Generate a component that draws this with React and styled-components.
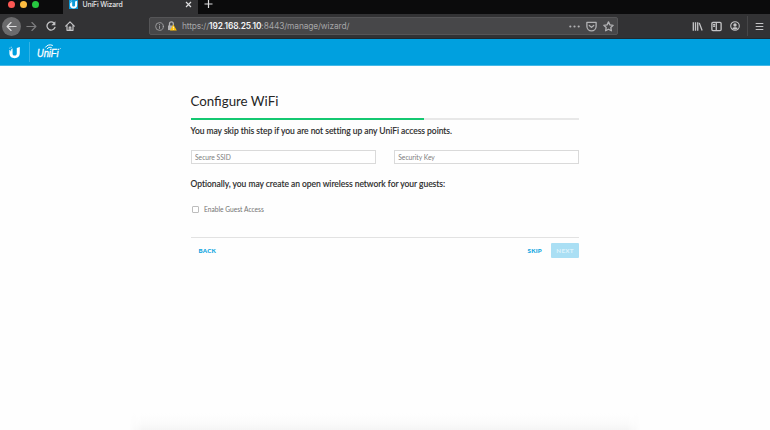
import React from "react";
import styled, { createGlobalStyle } from "styled-components";

const Global = createGlobalStyle`
  *, *::before, *::after { box-sizing: border-box; }
  body { margin: 0; background: #fefefe; overflow: hidden; font-family: Lato, sans-serif; }
`;

const Window = styled.div`
  display: flex;
  flex-direction: column;
  height: 430px;
  overflow: hidden;
`;

const TabBar = styled.div`
  display: flex;
  height: 14px;
  background: #0b0b0c;
`;

const Lights = styled.div`
  display: flex;
  gap: 5px;
  width: 63px;
  padding: 0.5px 0 0 8px;
`;

const Light = styled.span`
  width: 7px;
  height: 7px;
  border-radius: 50%;
  background: ${(p) => p.$color};
`;

const Tab = styled.div`
  display: flex;
  align-items: flex-start;
  width: 135px;
  height: 14px;
  padding-left: 6px;
  background: #323234;
`;

const Favicon = styled.span`
  width: 9px;
  height: 9px;
  background: #0b9bd9;
  svg { display: block; }
`;

const TabTitle = styled.span`
  flex: 1;
  margin-left: 4.5px;
  font: 500 6.9px/9px Inter, sans-serif;
  letter-spacing: -0.15px;
  color: #e4e4e6;
  white-space: nowrap;
`;

const TabClose = styled.svg`
  margin: 1px 6px 0 0;
`;

const NewTab = styled.svg`
  margin: 0 0 0 6px;
`;

const Toolbar = styled.div`
  display: flex;
  align-items: center;
  height: 25px;
  padding-left: 2px;
  background: #323234;
  border-bottom: 1px solid #1d2a32;
`;

const NavButton = styled.span`
  display: flex;
  align-items: center;
  justify-content: center;
  width: 19px;
  height: 19px;
  border-radius: 50%;
  background: ${(p) => (p.$filled ? "#6b6b6d" : "transparent")};
  margin-right: ${(p) => p.$gap || 0}px;
`;

const AddressBar = styled.div`
  display: flex;
  align-items: center;
  width: 469px;
  height: 18px;
  margin-left: 70px;
  padding: 0 3px 0 5px;
  border: 1px solid #555557;
  border-radius: 2px;
  background: #474749;
`;

const LockIcon = styled.svg`
  margin-left: 3px;
`;

const Url = styled.span`
  flex: 1;
  margin-left: 5px;
  font: 400 8.4px/16px Inter, sans-serif;
  letter-spacing: -0.14px;
  color: #a5a5a7;
  white-space: nowrap;
  b { color: #f4f4f5; font-weight: 600; }
`;

const BarIcons = styled.div`
  display: flex;
  align-items: center;
  gap: 6px;
`;

const Tools = styled.div`
  display: flex;
  align-items: center;
  gap: 8px;
  margin-left: auto;
`;

const MenuButton = styled.span`
  display: flex;
  align-items: center;
  height: 20px;
  border-left: 1px solid #464648;
  margin-left: -1px;
  padding: 0 6.5px 0 7px;
`;

const BrandBar = styled.header`
  display: flex;
  align-items: center;
  flex-shrink: 0;
  height: 27px;
  padding-left: 8px;
  background: #00a0df;
  border-bottom: 1px solid #45b9e7;
`;

const BrandDivider = styled.span`
  width: 1px;
  height: 20px;
  margin: 0 7px 0 8px;
  background: #33b3e5;
`;

const Wizard = styled.main`
  width: 388.5px;
  margin: 26px 0 0 190.5px;
`;

const Title = styled.h1`
  margin: 0;
  font-size: 13.3px;
  line-height: 19px;
  font-weight: 400;
  color: #252525;
`;

const Progress = styled.div`
  height: 2px;
  margin-top: 7px;
  background: #e8e8e8;
`;

const ProgressFill = styled.div`
  width: 60%;
  height: 2px;
  background: #14c871;
`;

const Note = styled.p`
  margin: ${(p) => p.$top}px 0 0;
  font-size: 8.5px;
  line-height: 12px;
  font-weight: 500;
  color: #2b2b2b;
  letter-spacing: -0.035px;
  font-variant-ligatures: common-ligatures;
  -webkit-text-stroke: 0.12px #2b2b2b;
`;

const Fields = styled.div`
  display: grid;
  grid-template-columns: 1fr 1fr;
  gap: 18px;
  margin-top: 13px;
`;

const Field = styled.input`
  width: 100%;
  height: 14px;
  padding: 0 3.5px;
  border: 1px solid #dadada;
  border-radius: 0;
  background: #fff;
  font: 400 6.7px Lato, sans-serif;
  &::placeholder { color: #7c7c7c; opacity: 1; }
`;

const GuestOption = styled.label`
  display: flex;
  align-items: center;
  gap: 5px;
  height: 10px;
  margin: 14px 0 0 1.5px;
  font-size: 6.65px;
  line-height: 10px;
  color: #737373;
`;

const Checkbox = styled.input`
  appearance: none;
  width: 7px;
  height: 7px;
  margin: 0;
  border: 1px solid #bdbdbd;
  border-radius: 1px;
  background: #fff;
`;

const Actions = styled.footer`
  display: flex;
  align-items: center;
  height: 21px;
  margin-top: 23px;
  padding-top: 5px;
  padding-left: 8px;
  border-top: 1px solid #e2e2e2;
`;

const Action = styled.button`
  border: 0;
  padding: 0;
  background: none;
  color: #0aa4df;
  font: 900 6.2px/14px Lato, sans-serif;
  letter-spacing: 0.25px;
  margin-right: ${(p) => (p.$push ? "auto" : "9px")};
`;

const NextButton = styled(Action)`
  width: 28px;
  height: 15px;
  margin: 0;
  border-radius: 1px;
  background: #aadff4;
  color: #dcf2fb;
`;

const DockShadow = styled.div`
  width: 512px;
  height: 17px;
  margin: auto 0 0 129px;
  background: linear-gradient(#fefefe, #fbfbfb 60%, #f5f5f5);
  mask-image: linear-gradient(90deg, transparent, #000 14px, #000 498px, transparent);
`;

const Glyph = ({ size = 10, children, color = "#c3c3c5", width = 1.1 }) => (
  <svg width={size} height={size} viewBox="0 0 10 10" fill="none" stroke={color} strokeWidth={width} strokeLinecap="round" strokeLinejoin="round">
    {children}
  </svg>
);

const UMark = ({ size }) => (
  <svg width={size} height={size} viewBox="0 0 12 12" fill="#fff">
    <path d="M4.200 2.300v4.300c0 1.500.6 2.200 1.900 2.200 1.300 0 2-.6 2-2.100V1.900l2.800-1v5.800c0 2.900-1.700 4.500-4.700 4.500S1.300 9.600 1.300 6.700V3.600h.9v1.200h.7V2.900h.6v-.6z" />
    <path d="M1.300 1.500h.8v.8h-.8zM2.600.7h.7v.8h-.7z" />
  </svg>
);

const UniFiLogo = () => (
  <svg width="30" height="18" viewBox="0 -1 30 18">
    <text x="0" y="13" fill="#fff" fontFamily="'Liberation Sans', sans-serif" fontStyle="italic" fontSize="11" stroke="#fff" strokeWidth="0.3" textLength="21.500" lengthAdjust="spacingAndGlyphs">UniFi</text>
    <g fill="none" stroke="#fff" strokeWidth="1" strokeLinecap="round">
      <path d="M8.500 3.200C10 .9 13 .2 15.500 1.300" />
      <path d="M10.200 4.800c1-1.500 2.600-1.900 4.200-1.200" />
    </g>
    <circle cx="23.300" cy="4.600" r=".5" fill="#bfe6f7" />
  </svg>
);

export default function App() {
  return (
    <Window>
      <Global />
      <TabBar>
        <Lights>
          <Light $color="#fc5753" />
          <Light $color="#fdbc40" />
          <Light $color="#27c840" />
        </Lights>
        <Tab>
          <Favicon><UMark size={9} /></Favicon>
          <TabTitle>UniFi Wizard</TabTitle>
          <TabClose width="7" height="7" viewBox="0 0 7 7" stroke="#dededf" strokeWidth="1.200">
            <path d="M1 1l5 5M6 1L1 6" />
          </TabClose>
        </Tab>
        <NewTab width="9" height="9" viewBox="0 0 9 9" stroke="#dededf" strokeWidth="1.200">
          <path d="M4.500 0v8M.5 4h8" />
        </NewTab>
      </TabBar>
      <Toolbar>
        <NavButton $filled $gap={1}>
          <Glyph size={11} color="#dcdcde"><path d="M9.200 5H1M4.600 1.400 1 5l3.600 3.600" /></Glyph>
        </NavButton>
        <NavButton>
          <Glyph size={11} color="#7c7c7e"><path d="M.8 5H9M5.400 1.400 9 5 5.400 8.600" /></Glyph>
        </NavButton>
        <NavButton>
          <Glyph width={1.3}><path d="M9 6.300A4.100 4.100 0 1 1 8 2" /><path d="M9.400.3v4H5.400z" fill="#c3c3c5" stroke="none" /></Glyph>
        </NavButton>
        <NavButton>
          <Glyph width={1.2}><path d="M.7 5.100 5 .8l4.300 4.300M2 4.500v4.800h6V4.500M4.200 9.200V6.200h1.600v3" /></Glyph>
        </NavButton>
        <AddressBar>
          <Glyph size={9} width={0.9} color="#a9a9ab">
            <circle cx="5" cy="5" r="4.300" /><path d="M5 4.600v2.600M5 2.700v.2" />
          </Glyph>
          <LockIcon width="10" height="10" viewBox="0 0 10 10">
            <path d="M2.500 5V2.800a1.900 1.900 0 0 1 3.800 0v1.500" stroke="#b0b0b2" strokeWidth="1.300" fill="none" />
            <path d="M1 4.500h5v4.600H1z" fill="#b0b0b2" />
            <path d="M6.400 3.600 9.800 9.500H3z" fill="#ffbf00" />
            <path d="M6.400 5.600v1.900M6.400 8.100v.7" stroke="#fff" strokeWidth=".8" />
          </LockIcon>
          <Url>https://<b>192.168.25.10</b>:8443/manage/wizard/</Url>
          <BarIcons>
            <Glyph size={11} color="#b2b2b4" width={2}><path d="M1.200 5h.01M5 5h.01M8.800 5h.01" /></Glyph>
            <Glyph size={11} color="#b2b2b4" width={1.2}>
              <path d="M.8 1.200h8.400v3.500a4.200 4.200 0 0 1-8.400 0zM3 4l2 1.800L7 4" />
            </Glyph>
            <Glyph size={11} color="#b2b2b4" width={1.2}>
              <path d="M5 .8l1.300 2.700 2.900.4-2.100 2 .5 3L5 7.500 2.400 8.900l.5-3-2.100-2 2.900-.4z" />
            </Glyph>
          </BarIcons>
        </AddressBar>
        <Tools>
          <Glyph size={11} width={1.2}><path d="M1.200 1.200v7.600M3.200 1.200v7.600M5.200 1.200v7.600M6.600 1.700l2.600 7" strokeLinecap="butt" /></Glyph>
          <Glyph size={11} width={1.2}><rect x=".8" y="1.300" width="8.400" height="7.400" rx="1" /><path d="M4.800 1.500v7M2.400 3.200h.8M2.400 4.800h.8" /></Glyph>
          <Glyph size={10}><circle cx="5" cy="5" r="4.300" /><circle cx="5" cy="4" r="1.700" fill="#c3c3c5" stroke="none" /><path d="M2.200 7.300C3 6 7 6 7.800 7.300 6.500 9 3.500 9 2.200 7.300z" fill="#c3c3c5" stroke="none" /></Glyph>
          <MenuButton>
            <Glyph size={9} width={1.2}><path d="M1.200 1.600h7.600M1.200 5h7.600M1.200 8.400h7.600" /></Glyph>
          </MenuButton>
        </Tools>
      </Toolbar>
      <BrandBar>
        <UMark size={13} />
        <BrandDivider />
        <UniFiLogo />
      </BrandBar>
      <Wizard>
        <Title>Configure WiFi</Title>
        <Progress><ProgressFill /></Progress>
        <Note $top={5}>You may skip this step if you are not setting up any UniFi access points.</Note>
        <Fields>
          <Field placeholder="Secure SSID" />
          <Field placeholder="Security Key" />
        </Fields>
        <Note $top={14}>Optionally, you may create an open wireless network for your guests:</Note>
        <GuestOption><Checkbox type="checkbox" />Enable Guest Access</GuestOption>
        <Actions>
          <Action $push>BACK</Action>
          <Action>SKIP</Action>
          <NextButton disabled>NEXT</NextButton>
        </Actions>
      </Wizard>
      <DockShadow />
    </Window>
  );
}
